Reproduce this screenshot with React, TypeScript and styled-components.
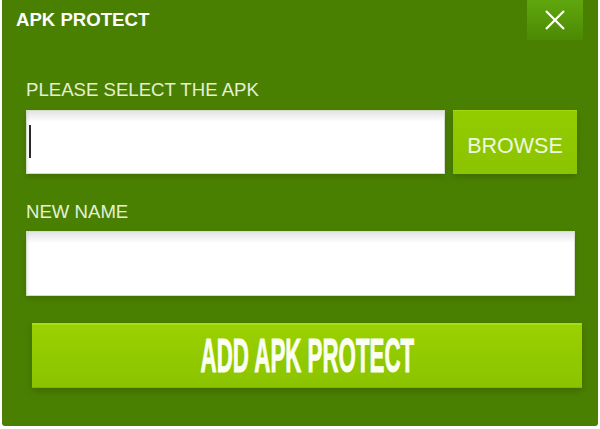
import React, { FC } from "react";
import styled, { createGlobalStyle } from "styled-components";

const GlobalStyle = createGlobalStyle`
    html, body {
        margin: 0;
        padding: 0;
        background: #ffffff;
    }
    body {
        font-family: "Liberation Sans", Arial, sans-serif;
    }
`;

const Panel = styled.div`
    box-sizing: border-box;
    width: 596px;
    height: 426px;
    margin: 0 2px;
    background: #4a8002;
    border-radius: 0 0 3px 3px;
    display: flex;
    flex-direction: column;
`;

const TitleBar = styled.div`
    display: flex;
    align-items: flex-start;
    justify-content: space-between;
    height: 40px;
    padding: 0 15px 0 14px;
`;

const Title = styled.div`
    color: #ffffff;
    font-size: 18.6px;
    font-weight: bold;
    line-height: 40px;
`;

const CloseButton = styled.button`
    width: 56px;
    height: 40px;
    border: none;
    padding: 0;
    background: linear-gradient(#60a70e, #4d8904);
    display: flex;
    align-items: center;
    justify-content: center;
    cursor: pointer;
`;

const Body = styled.div`
    display: flex;
    flex-direction: column;
    padding: 0 21px 0 24px;
`;

interface LabelProps {
    top: number;
}

const Label = styled.div<LabelProps>`
    margin-top: ${props => props.top}px;
    color: #e4f0d4;
    font-size: 18.6px;
    line-height: 21px;
`;

interface RowProps {
    top: number;
}

const Row = styled.div<RowProps>`
    display: flex;
    gap: 8px;
    margin-top: ${props => props.top}px;
`;

interface FieldProps {
    width: number;
    height: number;
}

const Field = styled.div<FieldProps>`
    box-sizing: border-box;
    width: ${props => props.width}px;
    height: ${props => props.height}px;
    background: linear-gradient(#e4e4e6 0, #f2f2f2 6px, #ffffff 11px);
    border: 1px solid #d6dccb;
    box-shadow: inset 3px 0 3px -2px rgba(0, 0, 0, 0.08), 0 3px 6px rgba(0, 0, 0, 0.14);
    display: flex;
    align-items: center;
    padding-left: 2px;
`;

const Caret = styled.span`
    display: block;
    width: 2px;
    height: 33px;
    margin-top: -2px;
    background: #2a2a2a;
`;

const BrowseButton = styled.button`
    box-sizing: border-box;
    width: 124px;
    height: 64px;
    border: none;
    border-top: 1px solid #a3d80f;
    padding: 7px 0 0;
    background: linear-gradient(#93cc00, #8bc400);
    box-shadow: 0 3px 6px rgba(0, 0, 0, 0.16);
    color: #eef7e2;
    font-family: "Liberation Sans", Arial, sans-serif;
    font-size: 21.5px;
    cursor: pointer;
`;

const AddButton = styled.button`
    box-sizing: border-box;
    width: 550px;
    height: 65px;
    margin: 27px 0 0 6px;
    border: none;
    border-top: 2px solid #a8dc18;
    border-bottom: 1px solid #7fb300;
    padding: 0;
    background: linear-gradient(#99d100, #8bc300);
    box-shadow: 0 3px 7px rgba(0, 0, 0, 0.18);
    display: flex;
    align-items: center;
    justify-content: center;
    overflow: hidden;
    cursor: pointer;
`;

const AddText = styled.span`
    display: inline-block;
    color: #fbfff2;
    font-family: "Liberation Sans", Arial, sans-serif;
    font-weight: bold;
    font-size: 47.5px;
    line-height: 1;
    white-space: nowrap;
    -webkit-text-stroke: 1px #fbfff2;
    transform: scaleX(0.47);
`;

const CloseIcon: FC = () => (
    <svg width="20" height="20" viewBox="0 0 20 20">
        <path d="M1 1 L19 19 M19 1 L1 19" stroke="#ffffff" strokeWidth="2.2" fill="none" />
    </svg>
);

const App: FC = () => {
    return <>
        <GlobalStyle />
        <Panel>
            <TitleBar>
                <Title>APK PROTECT</Title>
                <CloseButton aria-label="close"><CloseIcon /></CloseButton>
            </TitleBar>
            <Body>
                <Label top={39}>PLEASE SELECT THE APK</Label>
                <Row top={10}>
                    <Field width={419} height={64}><Caret /></Field>
                    <BrowseButton>BROWSE</BrowseButton>
                </Row>
                <Label top={27}>NEW NAME</Label>
                <Row top={9}>
                    <Field width={549} height={65} />
                </Row>
                <AddButton><AddText>ADD APK PROTECT</AddText></AddButton>
            </Body>
        </Panel>
    </>;
};

export default App;
